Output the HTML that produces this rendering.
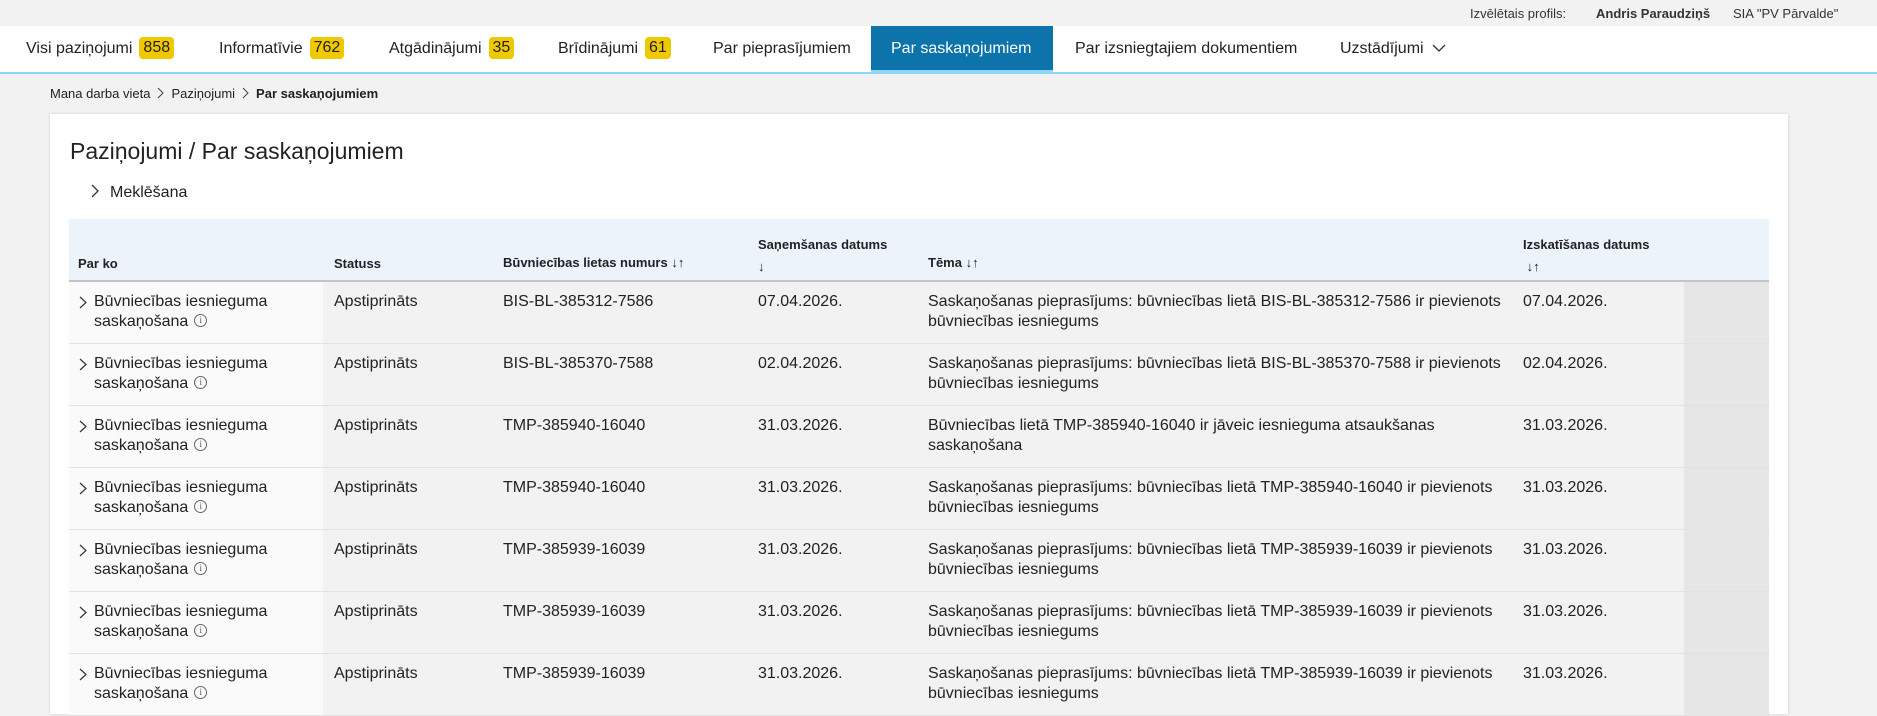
<!DOCTYPE html>
<html><head><meta charset="utf-8">
<style>
*{box-sizing:border-box;margin:0;padding:0}
body{width:1877px;height:701px;overflow:hidden;background:#f2f2f2;font-family:"Liberation Sans",sans-serif;color:#222;position:relative}
.top{position:absolute;top:0;left:0;width:1877px;height:26px;font-size:13px;color:#333}
.top span{position:absolute;top:6px}
.nav{position:absolute;top:26px;left:0;width:1877px;height:48px;background:#fff;border-bottom:2px solid #8fd6f5}
.nav .it{position:absolute;top:0;height:46px;line-height:46px;font-size:16px;color:#222;white-space:nowrap}
.badge{display:inline-block;background:#f0c800;border-radius:4px;height:22px;line-height:22px;padding:0 4px;margin-left:7px;font-size:16px;vertical-align:1px}
.nav .act{background:#0c74aa;color:#fff;height:48px;border-bottom:4px solid #8fd6f5;padding:0 20px}
.bc{position:absolute;top:86px;left:50px;font-size:13px;color:#222}
.bc svg{margin:0 7px;vertical-align:-1px}
.card{position:absolute;top:114px;left:50px;width:1738px;height:600px;background:#fff;box-shadow:0 0 3px rgba(0,0,0,.15)}
h1{position:absolute;top:24px;left:20px;font-size:23px;font-weight:normal;color:#222}
.mek{position:absolute;top:70px;left:40px;font-size:16px}
.thead{position:absolute;top:105px;left:19px;width:1700px;height:63px;background:#edf3fb;border-bottom:2px solid #c4c4c4;font-size:13px;font-weight:bold}
.thead div{position:absolute}
.row{position:absolute;left:19px;width:1700px;height:62px;background:#f2f2f2;border-bottom:1px solid #e2e2e2;font-size:16px;line-height:20px}
.row .c1{position:absolute;left:0;top:0;width:254px;height:61px;background:#fafafa;padding:10px 0 0 25px}
.row .c1 svg.ch{position:absolute;left:10px;top:14px}
.row .cl{position:absolute;right:0;top:0;width:85px;height:61px;background:#e6e6e6}
.row div.t{position:absolute;top:10px}
.i{display:inline-block;width:13px;height:13px;border:1px solid #666;border-radius:50%;font-size:9px;line-height:11px;text-align:center;vertical-align:3px;margin-left:6px;font-family:"Liberation Serif",serif;color:#555}
</style></head><body>
<div class="top">
<span style="left:1470px">Izvēlētais profils:</span>
<span style="left:1596px;font-weight:bold">Andris Paraudziņš</span>
<span style="left:1733px">SIA "PV Pārvalde"</span>
</div>
<div class="nav">
<div class="it" style="left:26px">Visi paziņojumi<span class="badge">858</span></div>
<div class="it" style="left:219px">Informatīvie<span class="badge">762</span></div>
<div class="it" style="left:389px">Atgādinājumi<span class="badge">35</span></div>
<div class="it" style="left:558px">Brīdinājumi<span class="badge">61</span></div>
<div class="it" style="left:713px">Par pieprasījumiem</div>
<div class="it act" style="left:871px;width:182px">Par saskaņojumiem</div>
<div class="it" style="left:1075px">Par izsniegtajiem dokumentiem</div>
<div class="it" style="left:1340px">Uzstādījumi <svg width="14" height="10" viewBox="0 0 14 10" style="margin-left:4px"><path d="M1 2l6 6 6-6" fill="none" stroke="#333" stroke-width="1.3"/></svg></div>
</div>
<div class="bc">Mana darba vieta<svg width="7" height="12" viewBox="0 0 7 12"><path d="M1 1l5 5-5 5" fill="none" stroke="#444" stroke-width="1"/></svg>Paziņojumi<svg width="7" height="12" viewBox="0 0 7 12"><path d="M1 1l5 5-5 5" fill="none" stroke="#444" stroke-width="1"/></svg><b>Par saskaņojumiem</b></div>
<div class="card">
<h1>Paziņojumi / Par saskaņojumiem</h1>
<div class="mek"><svg width="10" height="14" viewBox="0 0 10 14" style="margin-right:10px;vertical-align:-1px"><path d="M2 1l6 6-6 6" fill="none" stroke="#333" stroke-width="1.3"/></svg>Meklēšana</div>
<div class="thead">
<div style="left:9px;top:37px">Par ko</div>
<div style="left:265px;top:37px">Statuss</div>
<div style="left:434px;top:36px">Būvniecības lietas numurs ↓↑</div>
<div style="left:689px;top:15px;line-height:22px">Saņemšanas datums<br>↓</div>
<div style="left:859px;top:36px">Tēma ↓↑</div>
<div style="left:1454px;top:15px;line-height:22px">Izskatīšanas datums<br>&nbsp;↓↑</div>
</div>
<div class="row" style="top:168px"><div class="c1"><svg class="ch" width="8" height="13" viewBox="0 0 8 13"><path d="M1 1l6 5.5-6 5.5" fill="none" stroke="#333" stroke-width="1.2"/></svg>Būvniecības iesnieguma<br>saskaņošana<span class="i">i</span></div><div class="t" style="left:265px">Apstiprināts</div><div class="t" style="left:434px">BIS-BL-385312-7586</div><div class="t" style="left:689px">07.04.2026.</div><div class="t" style="left:859px">Saskaņošanas pieprasījums: būvniecības lietā BIS-BL-385312-7586 ir pievienots<br>būvniecības iesniegums</div><div class="t" style="left:1454px">07.04.2026.</div><div class="cl"></div></div>
<div class="row" style="top:230px"><div class="c1"><svg class="ch" width="8" height="13" viewBox="0 0 8 13"><path d="M1 1l6 5.5-6 5.5" fill="none" stroke="#333" stroke-width="1.2"/></svg>Būvniecības iesnieguma<br>saskaņošana<span class="i">i</span></div><div class="t" style="left:265px">Apstiprināts</div><div class="t" style="left:434px">BIS-BL-385370-7588</div><div class="t" style="left:689px">02.04.2026.</div><div class="t" style="left:859px">Saskaņošanas pieprasījums: būvniecības lietā BIS-BL-385370-7588 ir pievienots<br>būvniecības iesniegums</div><div class="t" style="left:1454px">02.04.2026.</div><div class="cl"></div></div>
<div class="row" style="top:292px"><div class="c1"><svg class="ch" width="8" height="13" viewBox="0 0 8 13"><path d="M1 1l6 5.5-6 5.5" fill="none" stroke="#333" stroke-width="1.2"/></svg>Būvniecības iesnieguma<br>saskaņošana<span class="i">i</span></div><div class="t" style="left:265px">Apstiprināts</div><div class="t" style="left:434px">TMP-385940-16040</div><div class="t" style="left:689px">31.03.2026.</div><div class="t" style="left:859px">Būvniecības lietā TMP-385940-16040 ir jāveic iesnieguma atsaukšanas<br>saskaņošana</div><div class="t" style="left:1454px">31.03.2026.</div><div class="cl"></div></div>
<div class="row" style="top:354px"><div class="c1"><svg class="ch" width="8" height="13" viewBox="0 0 8 13"><path d="M1 1l6 5.5-6 5.5" fill="none" stroke="#333" stroke-width="1.2"/></svg>Būvniecības iesnieguma<br>saskaņošana<span class="i">i</span></div><div class="t" style="left:265px">Apstiprināts</div><div class="t" style="left:434px">TMP-385940-16040</div><div class="t" style="left:689px">31.03.2026.</div><div class="t" style="left:859px">Saskaņošanas pieprasījums: būvniecības lietā TMP-385940-16040 ir pievienots<br>būvniecības iesniegums</div><div class="t" style="left:1454px">31.03.2026.</div><div class="cl"></div></div>
<div class="row" style="top:416px"><div class="c1"><svg class="ch" width="8" height="13" viewBox="0 0 8 13"><path d="M1 1l6 5.5-6 5.5" fill="none" stroke="#333" stroke-width="1.2"/></svg>Būvniecības iesnieguma<br>saskaņošana<span class="i">i</span></div><div class="t" style="left:265px">Apstiprināts</div><div class="t" style="left:434px">TMP-385939-16039</div><div class="t" style="left:689px">31.03.2026.</div><div class="t" style="left:859px">Saskaņošanas pieprasījums: būvniecības lietā TMP-385939-16039 ir pievienots<br>būvniecības iesniegums</div><div class="t" style="left:1454px">31.03.2026.</div><div class="cl"></div></div>
<div class="row" style="top:478px"><div class="c1"><svg class="ch" width="8" height="13" viewBox="0 0 8 13"><path d="M1 1l6 5.5-6 5.5" fill="none" stroke="#333" stroke-width="1.2"/></svg>Būvniecības iesnieguma<br>saskaņošana<span class="i">i</span></div><div class="t" style="left:265px">Apstiprināts</div><div class="t" style="left:434px">TMP-385939-16039</div><div class="t" style="left:689px">31.03.2026.</div><div class="t" style="left:859px">Saskaņošanas pieprasījums: būvniecības lietā TMP-385939-16039 ir pievienots<br>būvniecības iesniegums</div><div class="t" style="left:1454px">31.03.2026.</div><div class="cl"></div></div>
<div class="row" style="top:540px"><div class="c1"><svg class="ch" width="8" height="13" viewBox="0 0 8 13"><path d="M1 1l6 5.5-6 5.5" fill="none" stroke="#333" stroke-width="1.2"/></svg>Būvniecības iesnieguma<br>saskaņošana<span class="i">i</span></div><div class="t" style="left:265px">Apstiprināts</div><div class="t" style="left:434px">TMP-385939-16039</div><div class="t" style="left:689px">31.03.2026.</div><div class="t" style="left:859px">Saskaņošanas pieprasījums: būvniecības lietā TMP-385939-16039 ir pievienots<br>būvniecības iesniegums</div><div class="t" style="left:1454px">31.03.2026.</div><div class="cl"></div></div>
</div>
</body></html>
